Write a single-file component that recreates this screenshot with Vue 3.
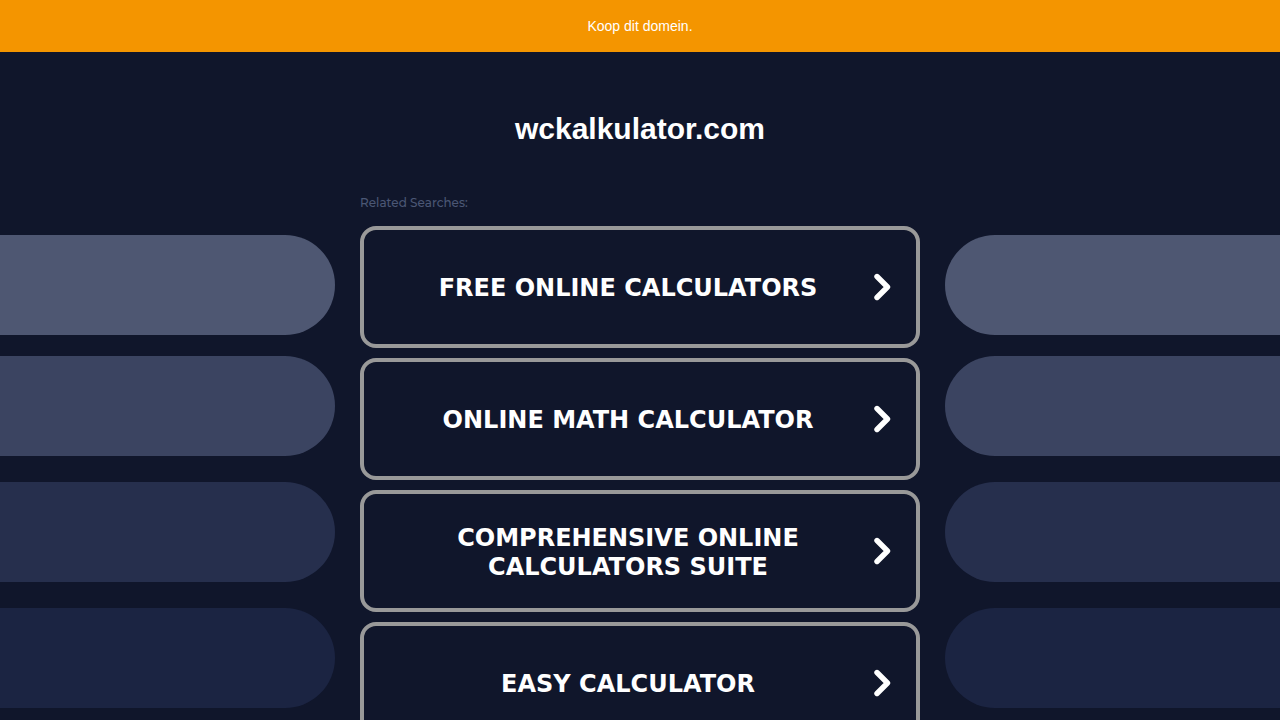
<script setup>
import { ref } from "vue";

const domain = ref("wckalkulator.com");
const searches = ref([
  "Free Online Calculators",
  "Online Math Calculator",
  "Comprehensive Online Calculators Suite",
  "Easy Calculator",
]);
const pills = ["one", "two", "three", "four"];
</script>

<template>
  <header class="banner">
    <a href="#">Koop dit domein.</a>
  </header>
  <main>
    <h1>{{ domain }}</h1>
    <div class="columns">
      <div class="pills left" aria-hidden="true">
        <span v-for="pill in pills" :key="pill" :class="['pill', pill]"></span>
      </div>
      <section class="related">
        <h2>Related Searches:</h2>
        <a v-for="item in searches" :key="item" class="card" href="#">
          <span class="title">{{ item }}</span>
          <svg class="arrow" width="20" height="28" viewBox="0 0 20 28">
            <path d="M5 3.5 L15.5 14 L5 24.5" />
          </svg>
        </a>
      </section>
      <div class="pills right" aria-hidden="true">
        <span v-for="pill in pills" :key="pill" :class="['pill', pill]"></span>
      </div>
    </div>
  </main>
</template>

<style>
body {
  margin: 0;
  background: #10162b;
}
</style>

<style scoped>
* {
  box-sizing: border-box;
}
a {
  text-decoration: none;
}
.banner {
  display: flex;
  justify-content: center;
  padding: 16px;
  background: #f49500;
  font: 14px/20px "Liberation Sans", Arial, sans-serif;
}
.banner a {
  color: #fff;
}
h1 {
  margin: 0;
  padding: 60px 16px 48px;
  color: #fff;
  font: bold 30px/34px "Liberation Sans", Arial, sans-serif;
  text-align: center;
}
.columns {
  display: grid;
  grid-template-columns: 1fr minmax(0, 560px) 1fr;
  gap: 25px;
}
.related {
  display: flex;
  flex-direction: column;
  gap: 10px;
}
h2 {
  margin: 0 0 4px;
  color: #4b5775;
  font: 500 12px/18px Montserrat, Inter, sans-serif;
}
.card {
  display: flex;
  align-items: center;
  min-height: 122px;
  padding: 16px 24px 16px 0;
  border: 4px solid #999;
  border-radius: 16px;
  color: #fff;
}
.title {
  flex: 1;
  padding: 3px 20px 0 40px;
  font: bold 24px/29px Verdana, "DejaVu Sans", sans-serif;
  text-align: center;
  text-transform: uppercase;
}
.arrow {
  flex: none;
}
.arrow path {
  fill: none;
  stroke: #fff;
  stroke-width: 5.4;
  stroke-linecap: round;
  stroke-linejoin: round;
}
.pills {
  display: flex;
  flex-direction: column;
  gap: 26px;
  padding-top: 41px;
}
.pill {
  height: 100px;
}
.left .pill {
  border-radius: 0 50px 50px 0;
}
.right .pill {
  border-radius: 50px 0 0 50px;
}
.one {
  margin-bottom: -5px;
  background: #4e5772;
}
.two {
  background: #3b4461;
}
.three {
  background: #262f4d;
}
.four {
  background: #1b2442;
}
</style>
